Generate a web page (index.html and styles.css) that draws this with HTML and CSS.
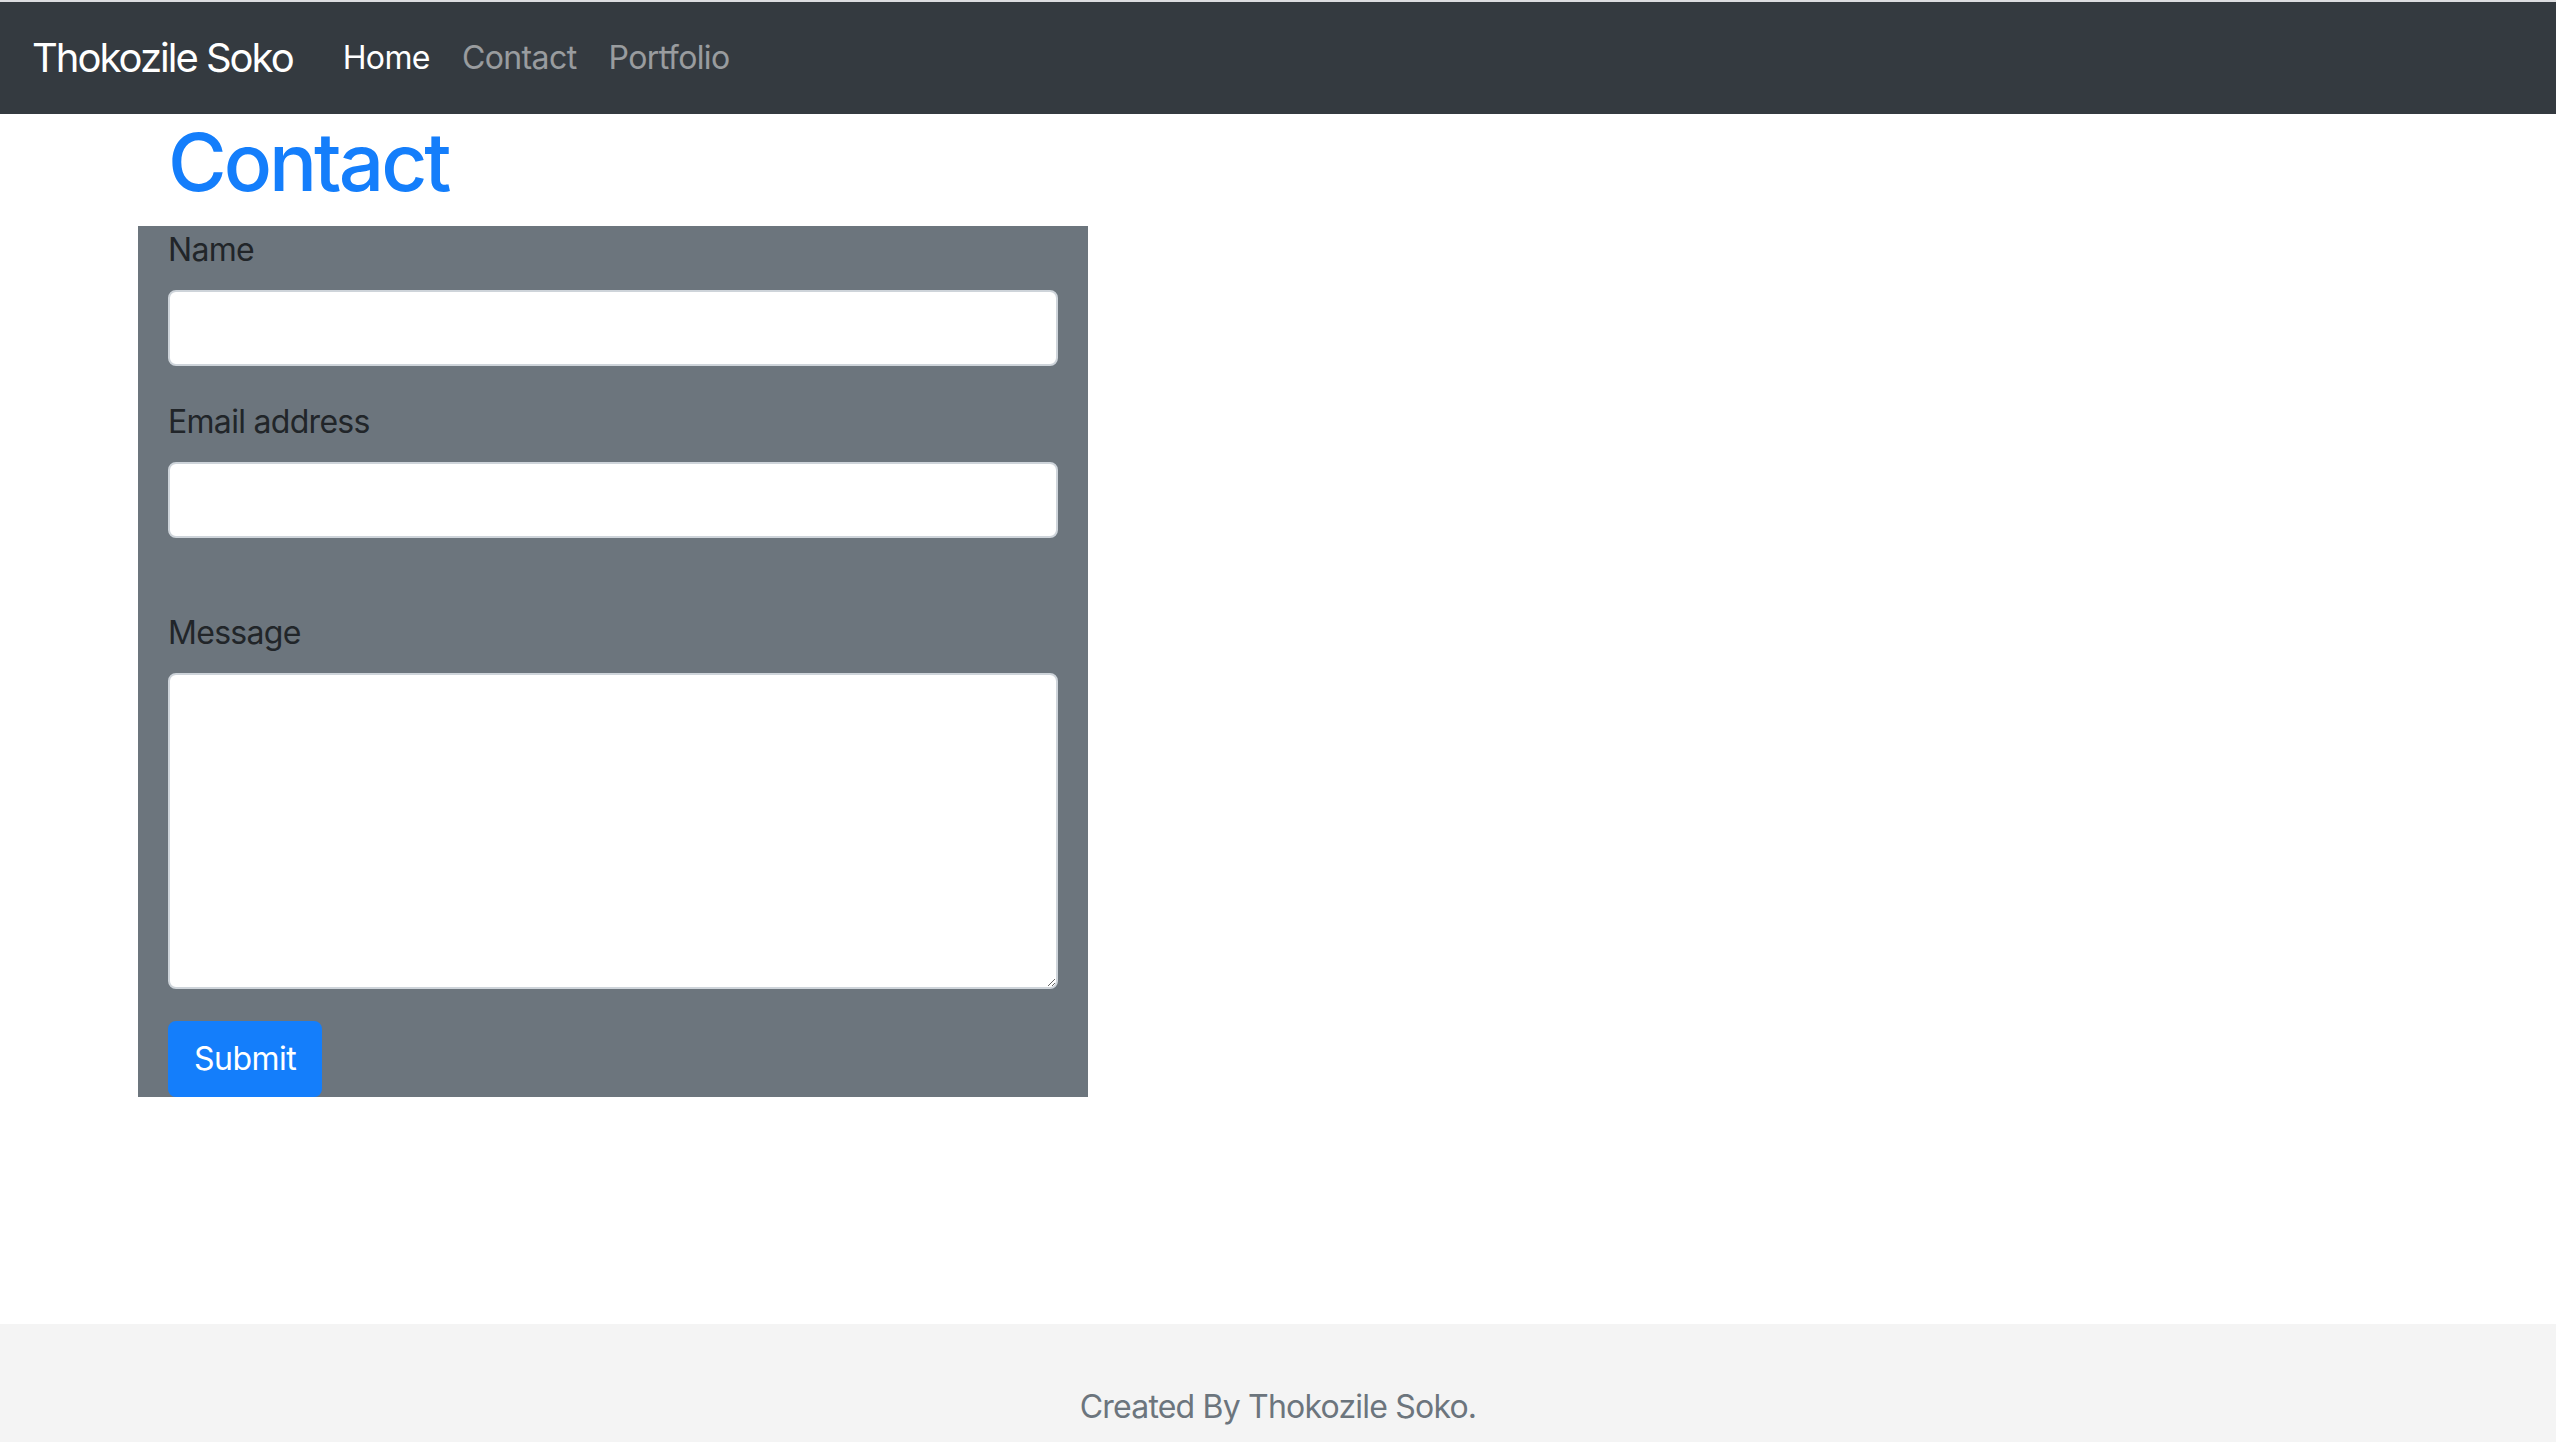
FILE: index.html
```html
<!DOCTYPE html>
<html lang="en">
<head>
<meta charset="utf-8">
<title>Contact</title>
<link rel="stylesheet" href="styles.css">
</head>
<body>
<nav class="navbar">
  <a class="brand" href="#">Thokozile Soko</a>
  <ul class="nav">
    <li><a class="nav-link active" href="#">Home</a></li>
    <li><a class="nav-link" href="#">Contact</a></li>
    <li><a class="nav-link" href="#">Portfolio</a></li>
  </ul>
</nav>
<main class="main">
  <div class="container">
    <h1 class="title">Contact</h1>
    <form class="contact-form">
      <div class="form-group">
        <label class="label" for="name">Name</label>
        <input class="control" type="text" id="name">
      </div>
      <div class="form-group">
        <label class="label" for="email">Email address</label>
        <input class="control" type="email" id="email">
      </div>
      <div class="spacer"></div>
      <div class="form-group">
        <label class="label" for="msg">Message</label>
        <textarea class="control textarea" id="msg"></textarea>
      </div>
      <button class="btn" type="button">Submit</button>
    </form>
  </div>
</main>
<footer class="footer">
  <span class="footer-text">Created By Thokozile Soko.</span>
</footer>
</body>
</html>
```

FILE: styles.css
```css
* { box-sizing: border-box; }
html, body { margin: 0; padding: 0; }
body {
  font-family: Inter, "Liberation Sans", Arial, sans-serif;
  font-size: 32px;
  line-height: 48px;
  color: #212529;
  background: #fff;
  height: 1442px;
  display: flex;
  flex-direction: column;
  border-top: 2px solid #dcdde0;
  overflow: hidden;
}
.navbar {
  background: #343a40;
  height: 112px;
  padding: 16px 32px;
  display: flex;
  align-items: center;
  flex: none;
}
.brand {
  color: #fff;
  text-decoration: none;
  font-size: 40px;
  line-height: 60px;
  margin-right: 34px;
  letter-spacing: -2px;
}
.nav {
  list-style: none;
  margin: 0;
  padding: 0;
  display: flex;
}
.nav-link {
  display: block;
  padding: 16px 16px;
  color: rgba(255,255,255,0.5);
  text-decoration: none;
  font-size: 32px;
  line-height: 48px;
  letter-spacing: -0.6px;
}
.nav-link.active { color: #fff; }
.main { flex: 1; }
.container {
  width: 2280px;
  margin: 0 auto;
  padding: 0 30px;
}
.title {
  margin: 0 0 16px;
  font-size: 80px;
  line-height: 96px;
  font-weight: 500;
  color: #147efb;
  letter-spacing: -3px;
}
.contact-form {
  width: 950px;
  margin-left: -30px;
  padding: 0 30px;
  background: #6c757d;
}
.form-group { margin-bottom: 32px; }
.label {
  display: inline-block;
  margin-bottom: 16px;
  letter-spacing: -0.7px;
}
.control {
  display: block;
  width: 100%;
  height: 76px;
  padding: 12px 24px;
  font-family: inherit;
  font-size: 32px;
  line-height: 48px;
  color: #495057;
  background: #fff;
  border: 2px solid #ced4da;
  border-radius: 8px;
  margin: 0;
}
.textarea {
  height: 316px;
  resize: vertical;
}
.spacer { height: 39px; }
.btn {
  display: inline-block;
  margin: 0;
  padding: 12px 24px;
  font-family: inherit;
  font-size: 32px;
  line-height: 48px;
  color: #fff;
  background: #147efb;
  border: 2px solid #147efb;
  border-radius: 8px;
  vertical-align: top;
  letter-spacing: -0.5px;
}
.footer {
  flex: none;
  height: 118px;
  background: #f4f4f4;
  text-align: center;
  padding-top: 59px;
}
.footer-text {
  color: #6c757d;
  letter-spacing: -0.8px;
}
```
